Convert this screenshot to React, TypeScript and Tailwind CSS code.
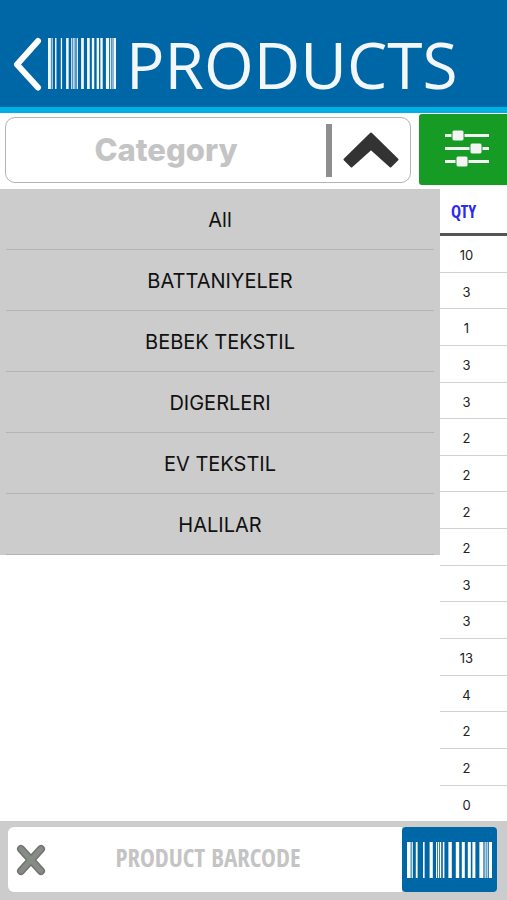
import React, { useState } from 'react';

const categories = ['All', 'BATTANIYELER', 'BEBEK TEKSTIL', 'DIGERLERI', 'EV TEKSTIL', 'HALILAR'];

const quantities = [10, 3, 1, 3, 3, 2, 2, 2, 2, 3, 3, 13, 4, 2, 2, 0];

// [x, width] of every bar on an 85 unit wide code
const bars = [
  [0, 3.6], [4.6, 1.2], [8.8, 1.8], [16, 1.6], [22.6, 3.2], [29, 1.2], [31, 1.2], [33, 1.2], [35.8, 1.6],
  [41.4, 3.4], [48.8, 3.4], [54.8, 3], [60.8, 3], [65.4, 3], [72.4, 4], [77.6, 1.1], [79.6, 1.1], [81.8, 3.2],
];

const Barcode: React.FC<{ className: string }> = ({ className }) => (
  <svg viewBox="0 0 85 36" preserveAspectRatio="none" fill="currentColor" className={className} aria-hidden="true">
    {bars.map(([x, w]) => (
      <rect key={x} x={x} y="0" width={w} height="36" />
    ))}
  </svg>
);

const Header: React.FC = () => (
  <header className="flex h-[113px] items-center border-b-6 border-[#00b0e4] bg-[#0067a6] pt-5 pl-3 text-[#f4f7fa]">
    <button type="button" aria-label="Back" className="shrink-0 text-white">
      <svg viewBox="0 0 32 54" className="h-[54px] w-8" fill="none" stroke="currentColor" strokeWidth="6" strokeLinecap="round" strokeLinejoin="round">
        <path d="M26 4 5 27.500 26 50.500" />
      </svg>
    </button>
    <Barcode className="ml-1 h-[51px] w-[68px] shrink-0" />
    <h1 className="ml-2.5 pt-0.5 font-['Open_Sans',sans-serif] text-[64px] leading-[64px] font-normal">PRODUCTS</h1>
  </header>
);

const CategoryBar: React.FC<{ open: boolean; onToggle: () => void }> = ({ open, onToggle }) => (
  <div className="flex h-[76px] pt-px">
    <div className="mt-[3px] ml-[5px] flex h-[66px] min-w-0 flex-1 items-center rounded-[10px] border border-[#b4b4b4]">
      <input
        type="text"
        aria-label="Category"
        placeholder="Category"
        className="min-w-0 flex-1 text-center font-[Inter,sans-serif] text-[31px] font-extrabold outline-none placeholder:text-[#c4c4c4]"
      />
      <span className="h-[53px] w-[6px] shrink-0 bg-[#8f8f8f]" />
      <button type="button" aria-label="Toggle categories" aria-expanded={open} onClick={onToggle} className="flex w-[78px] shrink-0 justify-center">
        <svg viewBox="0 0 56 36" className="h-9 w-14" fill="#333" stroke="#333" strokeWidth="2" strokeLinejoin="round" aria-hidden="true">
          <path d="M28 1.500 54.500 27.500 47.500 34.500 28 17 8.500 34.500 1.500 27.500z" />
        </svg>
      </button>
    </div>
    <button type="button" aria-label="Filters" className="ml-2 flex h-[71px] w-[88px] shrink-0 items-center justify-center rounded-l-[3px] bg-[#169b24] pb-1 pl-2">
      <svg viewBox="0 0 44 38" className="h-[38px] w-11" fill="#f4f4f4" aria-hidden="true">
        <path d="M0 5h44v3H0zM0 18h44v3H0zM0 31h44v3H0z" />
        <g stroke="#169b24">
          <rect x="7" y="1" width="12" height="11" rx="2" />
          <rect x="25" y="14" width="12" height="11" rx="2" />
          <rect x="11" y="27" width="12" height="11" rx="2" />
        </g>
      </svg>
    </button>
  </div>
);

const CategoryList: React.FC = () => (
  <ul className="bg-[#ccc] px-[6px]">
    {categories.map((name) => (
      <li key={name} className="border-b border-[#b4b4b4]">
        <button type="button" className="h-[60px] w-full pt-0.5 text-center font-[Inter,sans-serif] text-[20px] text-[#111]">
          {name}
        </button>
      </li>
    ))}
  </ul>
);

const QuantityTable: React.FC = () => (
  <table className="h-full w-full text-center">
    <thead>
      <tr>
        <th className="h-[45px] border-b-3 border-[#555] pt-0.5 pr-5 font-['Open_Sans_Condensed','Roboto_Condensed','Open_Sans',sans-serif] text-[17px] font-bold text-[#2b2bf0]">QTY</th>
      </tr>
    </thead>
    <tbody>
      {quantities.map((qty, i) => (
        <tr key={i} className="border-b border-[#d2d2d2] last:border-b-0">
          <td className="pt-1 pr-[14px] font-[Inter,sans-serif] text-[13px] text-[#222]">{qty}</td>
        </tr>
      ))}
    </tbody>
  </table>
);

const BarcodeBar: React.FC = () => (
  <footer className="flex h-[79px] bg-[#ccc] pt-[6px] pr-[10px] pb-2 pl-2">
    <div className="flex min-w-0 flex-1 items-center rounded-l-[6px] bg-white">
      <button type="button" aria-label="Clear" className="ml-2 shrink-0">
        <svg viewBox="0 0 30 32" className="h-8 w-[30px]" fill="none" strokeLinecap="round">
          <path d="M5 5 25 27M25 5 5 27" stroke="#70756f" strokeWidth="8" />
          <path d="M5 5 25 27M25 5 5 27" stroke="#868b85" strokeWidth="5" />
        </svg>
      </button>
      <input
        type="text"
        aria-label="Product barcode"
        placeholder="PRODUCT BARCODE"
        className="min-w-0 flex-1 pr-8 pb-1 text-center font-['Open_Sans_Condensed','Roboto_Condensed','Open_Sans',sans-serif] text-[25px] font-bold outline-none placeholder:text-[#c4c4c4]"
      />
    </div>
    <button type="button" aria-label="Scan barcode" className="flex w-[95px] shrink-0 items-center justify-center rounded-[4px] bg-[#0067a6] text-white">
      <Barcode className="h-9 w-[85px]" />
    </button>
  </footer>
);

export default function App() {
  const [open, setOpen] = useState(true);

  return (
    <div className="flex min-h-screen flex-col bg-white">
      <Header />
      <CategoryBar open={open} onToggle={() => setOpen(!open)} />
      <main className="flex flex-1">
        <div className="min-w-0 flex-1">{open && <CategoryList />}</div>
        <div className="flex w-[67px] shrink-0">
          <QuantityTable />
        </div>
      </main>
      <BarcodeBar />
    </div>
  );
}
